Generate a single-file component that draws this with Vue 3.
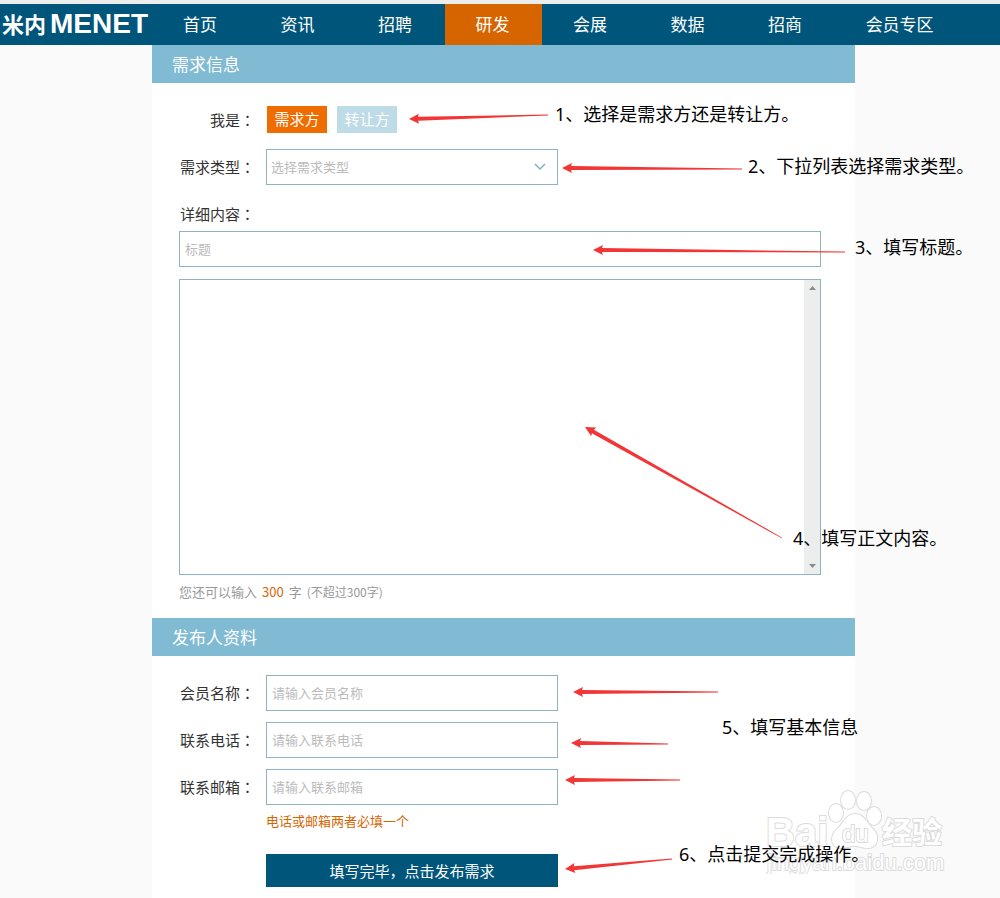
<template>
  <div class="page">

    <header class="topbar">
      <a class="logo" href="#">
        <span class="logo-cn">米内</span>
        <span class="logo-en">MENET</span>
      </a>
      <nav class="menu">
        <a
          v-for="item in menu"
          :key="item"
          href="#"
          :class="{ active: item === '研发' }"
        >{{ item }}</a>
      </nav>
    </header>

    <form class="panel" @submit.prevent>

      <h2>需求信息</h2>

      <div class="section demand">

        <div class="row row-role">
          <span class="label">我是<i>：</i></span>
          <div class="roles">
            <button
              v-for="item in roles"
              :key="item"
              type="button"
              :class="{ selected: item === role }"
              @click="role = item"
            >{{ item }}</button>
          </div>
        </div>

        <div class="row">
          <label class="label" for="type">需求类型<i>：</i></label>
          <div class="select">
            <select id="type" v-model="type">
              <option value="">选择需求类型</option>
              <option value="tech">技术需求</option>
              <option value="product">产品需求</option>
            </select>
            <svg width="12" height="8" viewBox="0 0 12 8">
              <path d="M1 1 L6 6 L11 1" fill="none" stroke="#84b2bd" stroke-width="1.5" />
            </svg>
          </div>
        </div>

        <label class="detail-label" for="title">详细内容<i>：</i></label>
        <input id="title" v-model="title" class="field" type="text" placeholder="标题" />

        <div class="editor">
          <textarea v-model="content" maxlength="300" aria-label="详细内容"></textarea>
          <div class="scrollbar">
            <svg width="7" height="4" viewBox="0 0 7 4"><path d="M0 4 L3.5 0 L7 4 Z" fill="#8b8b8b" /></svg>
            <svg width="7" height="4" viewBox="0 0 7 4"><path d="M0 0 L3.5 4 L7 0 Z" fill="#8b8b8b" /></svg>
          </div>
        </div>

        <p class="counter">
          <span>您还可以输入</span>
          <b>{{ 300 - content.length }}</b>
          <span>字</span>
          <small>(不超过300字)</small>
        </p>

      </div>

      <h2>发布人资料</h2>

      <div class="section contact">

        <div v-for="item in fields" :key="item.id" class="row">
          <label class="label" :for="item.id">{{ item.label }}<i>：</i></label>
          <input :id="item.id" class="field" type="text" :placeholder="'请输入' + item.label" />
        </div>

        <div class="finish">
          <p>电话或邮箱两者必填一个</p>
          <button type="submit">填写完毕，点击发布需求</button>
        </div>

      </div>

    </form>

    <div class="watermark">
      <svg width="182" height="92" viewBox="0 0 182 92">
        <g class="mark">
          <text x="0" y="64" font-size="40" font-weight="bold">Bai</text>
          <ellipse cx="70" cy="31" rx="7" ry="9" />
          <ellipse cx="82" cy="18" rx="7" ry="9" />
          <ellipse cx="98" cy="19" rx="7" ry="9" />
          <ellipse cx="108" cy="34" rx="7" ry="9" />
          <path d="M89 32 C98 32 101 41 107 47 C114 54 112 66 102 66 C96 66 94 64 88 64 C83 64 80 66 74 66 C64 65 64 54 71 47 C78 41 80 32 89 32 Z" />
          <text x="76" y="60" font-size="24">du</text>
          <text class="cn" x="116" y="61" font-size="30" font-weight="bold">经验</text>
          <text x="1" y="88" font-size="22">jingyan.baidu.com</text>
        </g>
      </svg>
    </div>

    <svg class="arrows">
      <polygon v-for="(a, i) in arrows" :key="i" :points="arrowPoints(a)" />
    </svg>

    <span
      v-for="note in notes"
      :key="note.text"
      class="note"
      :style="{ left: note.x + 'px', top: note.y + 'px' }"
    >{{ note.text }}</span>

  </div>
</template>

<script setup>
import { ref } from 'vue'

const menu = ['首页', '资讯', '招聘', '研发', '会展', '数据', '招商', '会员专区']

const roles = ['需求方', '转让方']
const role = ref('需求方')
const type = ref('')
const title = ref('')
const content = ref('')

const fields = [
  { id: 'name', label: '会员名称' },
  { id: 'phone', label: '联系电话' },
  { id: 'email', label: '联系邮箱' }
]

const notes = [
  { x: 555, y: 102, text: '1、选择是需求方还是转让方。' },
  { x: 748, y: 154, text: '2、下拉列表选择需求类型。' },
  { x: 855, y: 235, text: '3、填写标题。' },
  { x: 793, y: 526, text: '4、填写正文内容。' },
  { x: 722, y: 715, text: '5、填写基本信息' },
  { x: 679, y: 842, text: '6、点击提交完成操作。' }
]

// punta x, y - cola x, y
const arrows = [
  [409, 119, 548, 115],
  [562, 168, 742, 169],
  [593, 250, 845, 252],
  [585, 427, 782, 538],
  [573, 692, 718, 692],
  [571, 743, 668, 744],
  [565, 780, 680, 780],
  [565, 869, 672, 859]
]

function arrowPoints([x1, y1, x2, y2]) {
  const len = Math.hypot(x2 - x1, y2 - y1)
  const ux = (x2 - x1) / len
  const uy = (y2 - y1) / len
  const shape = [[0, 0], [10, 5], [9, 2], [len, 0.4], [len, -0.4], [9, -2], [10, -5]]

  return shape
    .map(([d, w]) => `${x1 + ux * d - uy * w},${y1 + uy * d + ux * w}`)
    .join(' ')
}
</script>

<style>
body {
  margin: 0;
  background: #fafafa;
}
</style>

<style scoped>
.page {
  position: relative;
  overflow: hidden;
  font-family: "Noto Sans CJK SC", sans-serif;
  font-size: 15px;
  color: #333;
}

.topbar {
  display: flex;
  height: 41px;
  border-top: 4px solid #eceeee;
  background: #00557b;
}

.logo {
  display: flex;
  gap: 4px;
  box-sizing: border-box;
  width: 152px;
  padding-left: 2px;
  color: #fff;
  line-height: 39px;
  text-decoration: none;
  white-space: nowrap;
}

.logo-cn {
  font-size: 22px;
  font-weight: bold;
}

.logo-en {
  font-family: "Liberation Sans", sans-serif;
  font-size: 28px;
  font-weight: bold;
}

.menu {
  flex: 1;
  display: grid;
  grid-template-columns: repeat(7, 23fr) 39fr;
}

.menu a {
  padding-left: 31px;
  color: #fff;
  font-size: 17px;
  line-height: 40px;
  text-decoration: none;
  white-space: nowrap;
}

.menu .active {
  background: #d66500;
}

.panel {
  width: 703px;
  margin-left: 152px;
  background: #fff;
}

h2 {
  margin: 0;
  padding-left: 20px;
  background: #80bad3;
  color: #fff;
  font-size: 17px;
  font-weight: normal;
  line-height: 38px;
}

.section {
  padding-left: 27px;
  padding-right: 34px;
}

.demand {
  padding-top: 23px;
  padding-bottom: 9px;
}

.contact {
  padding-top: 19px;
  padding-bottom: 11px;
}

.row {
  display: flex;
  align-items: center;
}

.row-role {
  margin-bottom: 16px;
}

.contact .row + .row {
  margin-top: 11px;
}

.label {
  box-sizing: border-box;
  width: 87px;
  padding-right: 11px;
  line-height: 22px;
  text-align: right;
  white-space: nowrap;
}

i {
  font-family: "Noto Sans CJK TC", sans-serif;
  font-style: normal;
}

button,
input,
select,
textarea {
  box-sizing: border-box;
  border: 1px solid #8fb4bf;
  border-radius: 0;
  background: #fff;
  color: #333;
  font-family: inherit;
  font-size: 13px;
  outline: none;
}

.roles {
  display: flex;
  gap: 10px;
  padding-left: 1px;
}

.roles button {
  width: 60px;
  height: 27px;
  padding: 0 0 2px;
  border: none;
  background: #bddce8;
  color: #fff;
  font-size: 15px;
}

.roles .selected {
  background: #ef6c00;
}

.field {
  height: 36px;
  padding: 0 5px 2px;
}

.row .field,
.select {
  width: 292px;
}

.field::placeholder {
  color: #bbb;
}

.select {
  position: relative;
}

.select select {
  display: block;
  width: 100%;
  height: 36px;
  padding: 0 4px 2px;
  appearance: none;
  color: #bbb;
}

.select svg {
  position: absolute;
  right: 12px;
  top: 14px;
  pointer-events: none;
}

.detail-label {
  display: block;
  margin-top: 12px;
  padding-left: 1px;
  line-height: 34px;
}

#title {
  display: block;
  width: 100%;
}

.editor {
  display: flex;
  box-sizing: border-box;
  height: 296px;
  margin-top: 12px;
  border: 1px solid #8fb4bf;
}

.editor textarea {
  flex: 1;
  padding: 5px;
  border: none;
  resize: none;
}

.scrollbar {
  display: flex;
  flex-direction: column;
  align-items: center;
  justify-content: space-between;
  box-sizing: border-box;
  width: 16px;
  padding: 6px 0;
  background: #eceeee;
}

.counter {
  display: flex;
  gap: 5px;
  margin: 0;
  color: #999;
  font-size: 13px;
  line-height: 34px;
}

.counter b {
  color: #d66500;
  font-weight: normal;
}

.counter small {
  font-size: 12px;
}

.finish {
  width: 292px;
  margin-left: 87px;
}

.finish p {
  margin: 0 0 18px;
  color: #d66500;
  font-size: 13px;
  line-height: 31px;
}

.finish button {
  display: block;
  width: 100%;
  height: 33px;
  border: none;
  background: #00557b;
  color: #fff;
  font-size: 15px;
}

.arrows {
  position: absolute;
  left: 0;
  top: 0;
  width: 100%;
  height: 100%;
  fill: #f23535;
  pointer-events: none;
}

.note {
  position: absolute;
  color: #000;
  font-family: "Noto Sans", "Noto Sans CJK SC", sans-serif;
  font-size: 18px;
  line-height: 24px;
  white-space: nowrap;
}

.watermark {
  position: absolute;
  left: 766px;
  top: 782px;
  pointer-events: none;
}

.mark {
  fill: #fff;
  stroke: #dcdcdc;
  stroke-width: 2;
  paint-order: stroke;
  font-family: "Liberation Sans", sans-serif;
}

.mark .cn {
  font-family: "Noto Sans CJK SC", sans-serif;
}
</style>
